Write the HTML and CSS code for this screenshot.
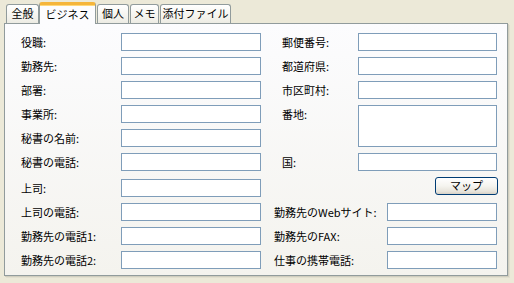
FILE: index.html
```html
<!DOCTYPE html>
<html lang="ja">
<head>
<meta charset="utf-8">
<link rel="stylesheet" href="styles.css">
</head>
<body>
<div class="tabs">
  <div class="tab t1">全般</div>
  <div class="tab active t2">ビジネス</div>
  <div class="tab t3">個人</div>
  <div class="tab t4">メモ</div>
  <div class="tab t5">添付ファイル</div>
</div>
<div class="panel">
  <div class="col left">
    <div class="row"><span class="lbl">役職:</span><span class="inp"></span></div>
    <div class="row"><span class="lbl">勤務先:</span><span class="inp"></span></div>
    <div class="row"><span class="lbl">部署:</span><span class="inp"></span></div>
    <div class="row"><span class="lbl">事業所:</span><span class="inp"></span></div>
    <div class="row"><span class="lbl">秘書の名前:</span><span class="inp"></span></div>
    <div class="row"><span class="lbl">秘書の電話:</span><span class="inp"></span></div>
    <div class="row gapped"><span class="lbl">上司:</span><span class="inp"></span></div>
    <div class="row"><span class="lbl">上司の電話:</span><span class="inp"></span></div>
    <div class="row"><span class="lbl">勤務先の電話1:</span><span class="inp"></span></div>
    <div class="row"><span class="lbl">勤務先の電話2:</span><span class="inp"></span></div>
  </div>
  <div class="col right">
    <div class="row"><span class="lbl">郵便番号:</span><span class="inp"></span></div>
    <div class="row"><span class="lbl">都道府県:</span><span class="inp"></span></div>
    <div class="row"><span class="lbl">市区町村:</span><span class="inp"></span></div>
    <div class="row tall"><span class="lbl">番地:</span><span class="inp area"></span></div>
    <div class="row"><span class="lbl">国:</span><span class="inp"></span></div>
    <div class="row btnrow"><span class="btn">マップ</span></div>
    <div class="row wide gapped"><span class="lbl">勤務先のWebサイト:</span><span class="inp"></span></div>
    <div class="row wide"><span class="lbl">勤務先のFAX:</span><span class="inp"></span></div>
    <div class="row wide"><span class="lbl">仕事の携帯電話:</span><span class="inp"></span></div>
  </div>
</div>
</body>
</html>
```

FILE: styles.css
```css
html, body {
  margin: 0;
  padding: 0;
}
body {
  width: 514px;
  height: 283px;
  background: #ECE9D8;
  font-family: "Noto Sans CJK JP", "Noto Sans", sans-serif;
  font-size: 11px;
  color: #000;
  overflow: hidden;
}
.tabs {
  display: flex;
  align-items: flex-end;
  height: 23px;
  padding-left: 6px;
  position: relative;
  z-index: 2;
}
.tab {
  box-sizing: border-box;
  height: 19px;
  border: 1px solid #919B9C;
  border-bottom: none;
  border-radius: 3px 3px 0 0;
  background: linear-gradient(#FFFFFF, #F3F2EC 70%, #ECEBE3);
  text-align: center;
  line-height: 17px;
  font-size: 11px;
  white-space: nowrap;
}
.t1 { width: 33px; }
.t2 { width: 57px; }
.t3 { width: 32px; margin-left: 1px; }
.t4 { width: 29px; margin-left: 1px; }
.t5 { width: 71px; margin-left: 1px; }
.tab.active {
  height: 22px;
  margin-bottom: -1px;
  background: #FCFCFE;
  border-top: 3px solid #F5B53B;
  box-shadow: inset 0 1px 0 #FFD87A;
  line-height: 19px;
}
.panel {
  box-sizing: border-box;
  margin-left: 4px;
  width: 504px;
  height: 253px;
  border: 1px solid #919B9C;
  background: linear-gradient(#FCFCFE, #F4F3EE);
  box-shadow: 1px 1px 0 #D0CEBF, 2px 2px 0 #E2DFCF;
  padding: 9px 0 0 16px;
  display: flex;
  gap: 21px;
}
.col {
  display: flex;
  flex-direction: column;
  gap: 6px;
}
.row {
  display: flex;
  align-items: center;
  height: 18px;
}
.row.gapped { margin-top: 2px; }
.lbl {
  white-space: nowrap;
  line-height: 18px;
}
.left .lbl { width: 100px; }
.left .inp { width: 140px; }
.right .lbl { width: 76px; }
.right .inp { width: 139px; }
.inp {
  box-sizing: border-box;
  height: 18px;
  background: #FFFFFF;
  border: 1px solid #7F9DB9;
}
.row.tall {
  height: 42px;
  align-items: flex-start;
}
.inp.area { height: 42px; }
.row.wide { margin-left: -8px; }
.right .row.wide .lbl { width: 113px; }
.right .row.wide .inp { width: 110px; }
.btnrow { justify-content: flex-end; width: 216px; }
.btn {
  box-sizing: border-box;
  width: 63px;
  height: 18px;
  border: 1px solid #003C74;
  border-radius: 3px;
  background: linear-gradient(#FFFFFF, #F5F4EF 50%, #E6E3DA 85%, #D6D0C5);
  text-align: center;
  line-height: 15px;
  font-size: 11px;
}
```
